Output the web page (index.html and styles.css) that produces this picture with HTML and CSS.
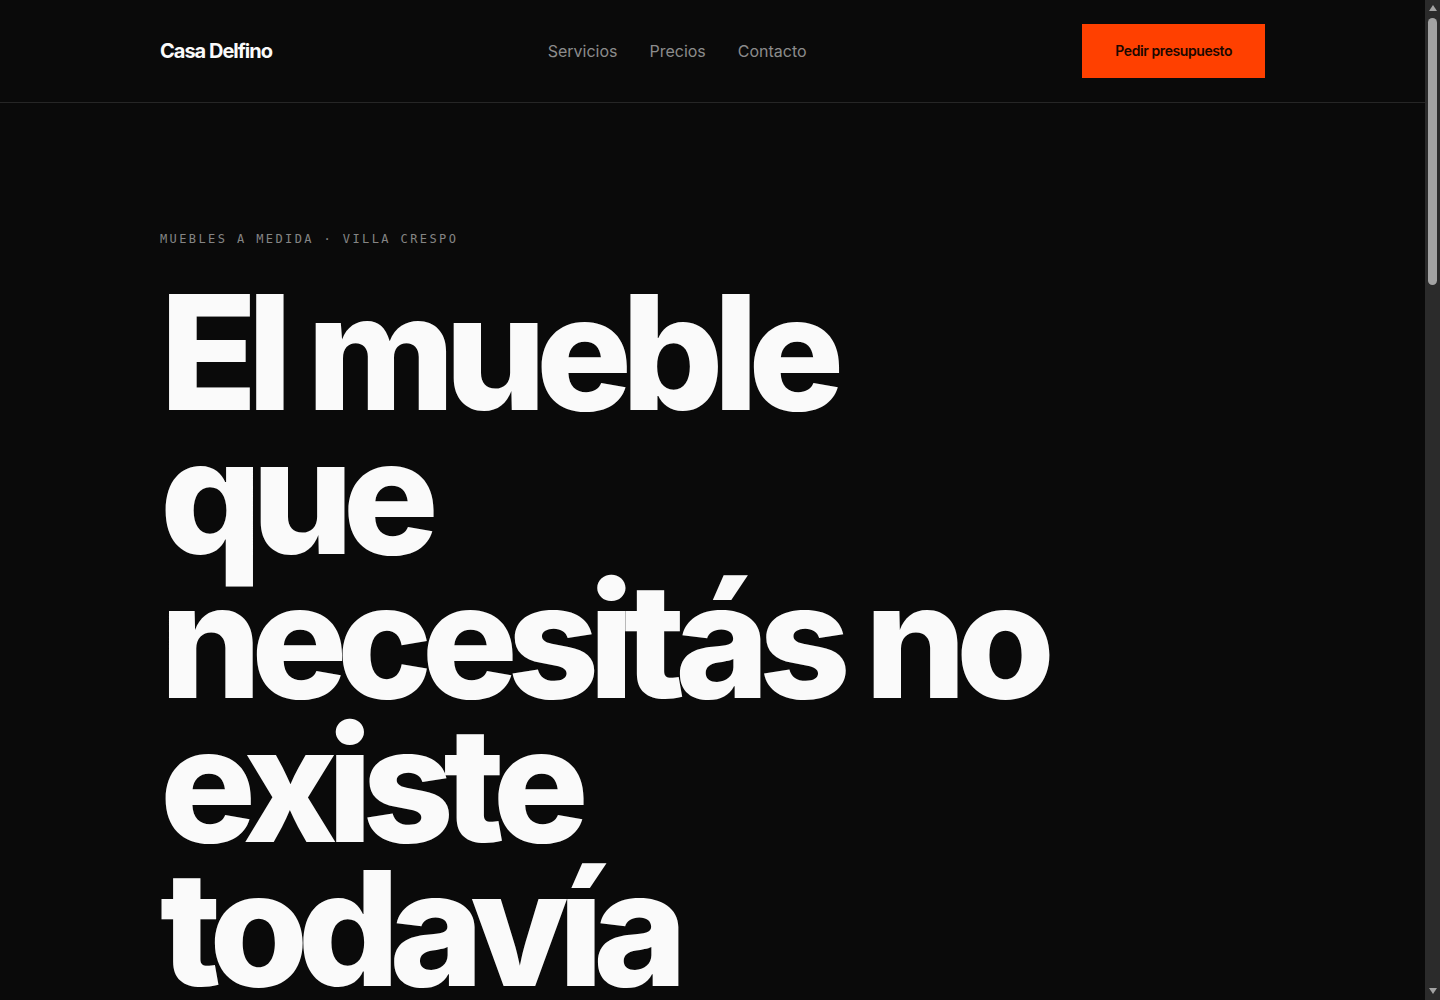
FILE: index.html
```html
<!DOCTYPE html>
<html lang="es">
<head>
<meta charset="utf-8">
<title>Casa Delfino</title>
<link rel="stylesheet" href="styles.css">
</head>
<body>
<div class="page">
  <header class="site-header">
    <div class="header-inner">
      <a class="logo" href="#">Casa Delfino</a>
      <nav class="nav">
        <a href="#">Servicios</a>
        <a href="#">Precios</a>
        <a href="#">Contacto</a>
      </nav>
      <a class="cta" href="#">Pedir presupuesto</a>
    </div>
  </header>
  <main class="hero">
    <p class="eyebrow">Muebles a medida · Villa Crespo</p>
    <h1 class="headline">El mueble que necesitás no existe todavía</h1>
  </main>
</div>
<div class="scrollbar" aria-hidden="true">
  <span class="sb-arrow sb-up"></span>
  <span class="sb-thumb"></span>
  <span class="sb-arrow sb-down"></span>
</div>
</body>
</html>
```
FILE: styles.css
```css
html {
  color-scheme: dark;
}
* {
  box-sizing: border-box;
}
body {
  margin: 0;
  background: #0a0a0a;
  color: #fafafa;
  font-family: Inter, "Noto Sans", sans-serif;
}
a {
  text-decoration: none;
  color: inherit;
}
.page {
  margin-right: 15px;
}
.site-header {
  border-bottom: 1px solid #262626;
}
.header-inner {
  display: flex;
  align-items: center;
  justify-content: space-between;
  padding: 24px 160px;
}
.logo {
  font-size: 20px;
  font-weight: 700;
  letter-spacing: -0.05em;
  color: #fafafa;
}
.nav {
  display: flex;
  gap: 32px;
  font-size: 16px;
  color: #8c8c8c;
}
.cta {
  display: block;
  background: #ff4000;
  color: #1a0800;
  font-size: 14px;
  font-weight: 600;
  letter-spacing: -0.03em;
  line-height: 18px;
  padding: 18px 33px;
}
.hero {
  padding: 127px 160px 0;
  min-height: 2560px;
}
.eyebrow {
  margin: 0 0 32px;
  font-family: "DejaVu Sans Mono", monospace;
  font-size: 12px;
  letter-spacing: 0.2em;
  text-transform: uppercase;
  color: #858585;
  line-height: 18px;
}
.headline {
  margin: 0;
  max-width: 920px;
  font-size: 160px;
  font-weight: 800;
  line-height: 0.9;
  letter-spacing: -0.065em;
  color: #fafafa;
}

/* browser scrollbar as seen in the reference */
.scrollbar {
  position: fixed;
  top: 0;
  right: 0;
  width: 15px;
  height: 100vh;
  background: #2b2b2b;
  display: flex;
  flex-direction: column;
  align-items: center;
  padding: 5px 0 6px;
}
.sb-arrow {
  width: 0;
  height: 0;
  border-left: 4px solid transparent;
  border-right: 4px solid transparent;
}
.sb-up {
  border-bottom: 6px solid #a3a3a3;
}
.sb-down {
  margin-top: auto;
  border-top: 6px solid #a3a3a3;
}
.sb-thumb {
  margin-top: 7px;
  width: 9px;
  height: 267px;
  border-radius: 5px;
  background: #a3a3a3;
}
```
